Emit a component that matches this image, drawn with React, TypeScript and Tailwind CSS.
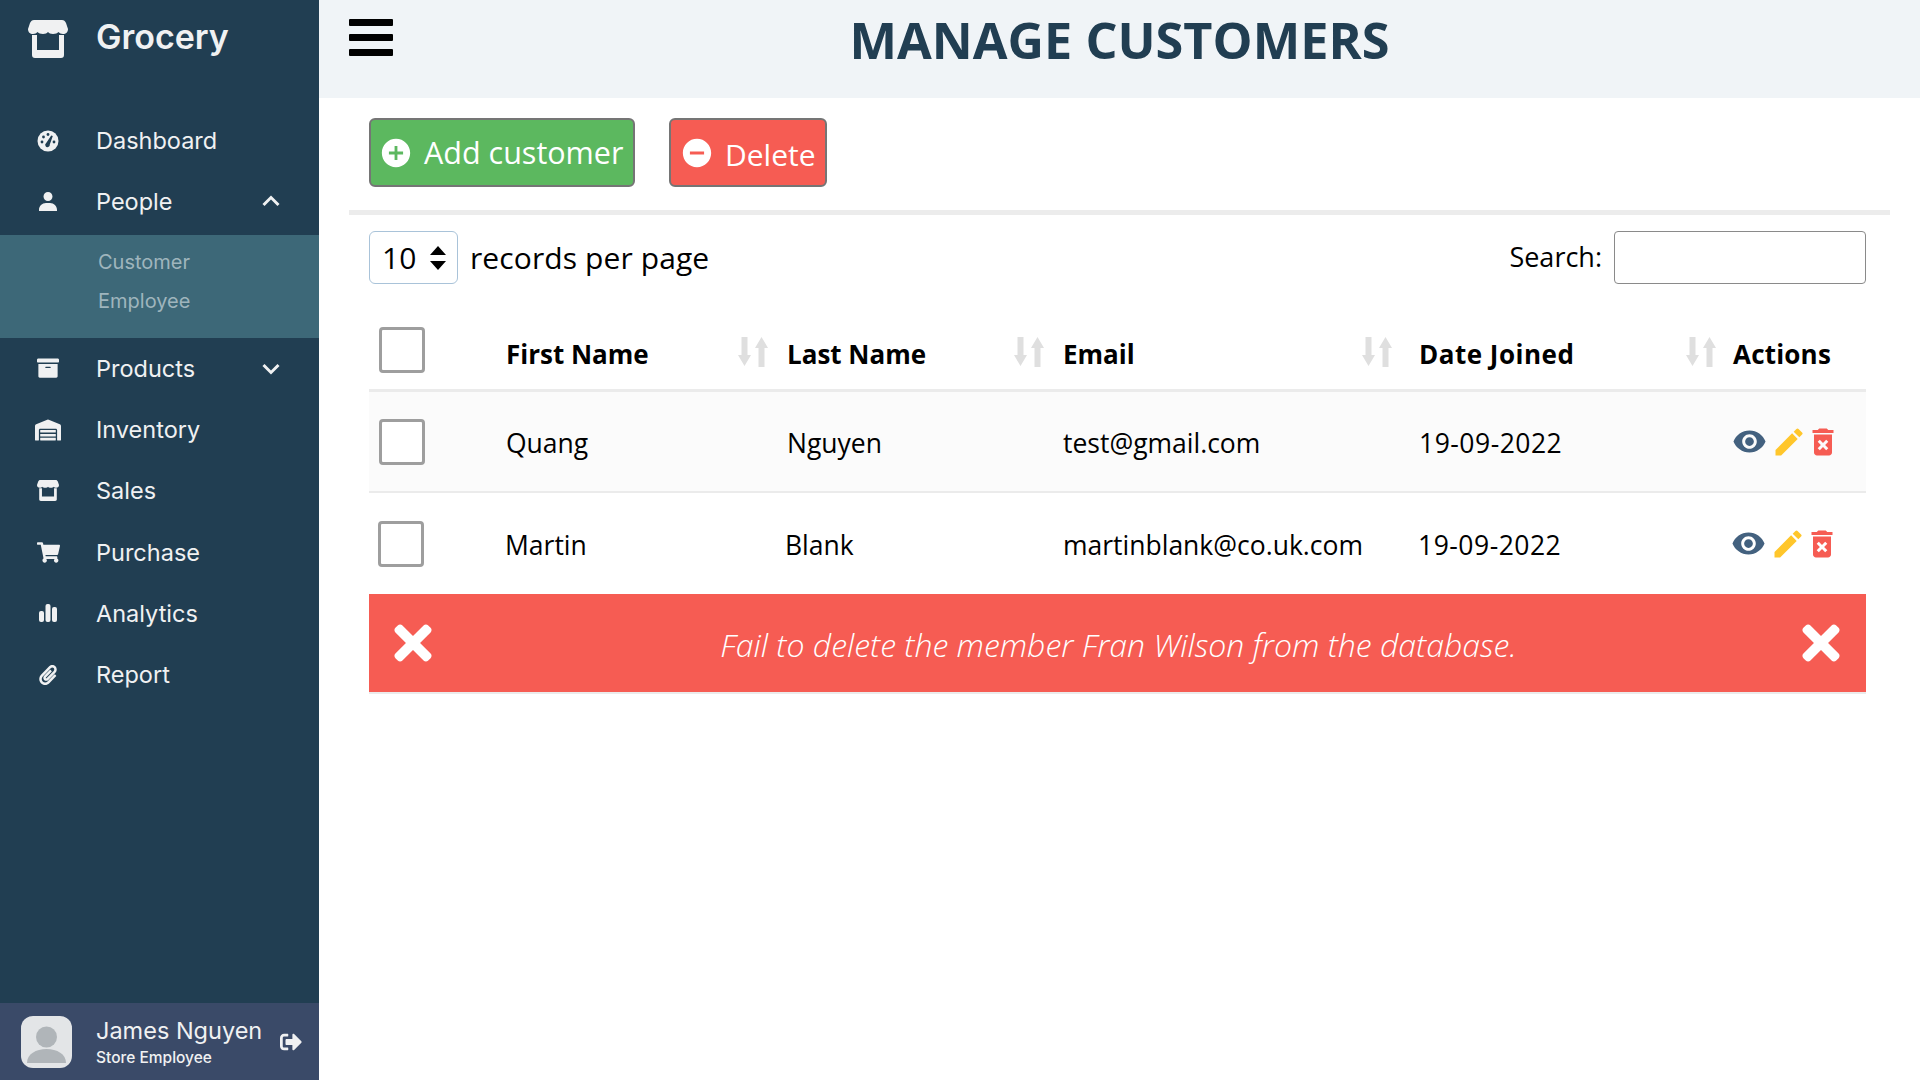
import React from 'react';
import { BiSolidUser, BiChevronUp, BiChevronDown } from 'react-icons/bi';
import {
  MdAddCircle,
  MdRemoveCircle,
  MdRemoveRedEye,
  MdEdit,
  MdDeleteForever,
} from 'react-icons/md';
import {
  FaTimes,
  FaWarehouse,
  FaArchive,
  FaShoppingCart,
  FaPaperclip,
  FaSignOutAlt,
} from 'react-icons/fa';

const StoreIcon = ({ className }: { className: string }) => (
  <svg viewBox="0 0 40 38" className={className} fill="currentColor">
    <path d="M6 0h28c2 0 3 1 4 3l2 6c0 3-2 5-5 5-2 0-3.5-1-4.5-2-1 1-3 2-5.5 2s-4-1-5-2c-1 1-2.5 2-5 2s-4.5-1-5.5-2c-1 1-2.5 2-4.5 2-3 0-5-2-5-5l2-6c1-2 2-3 4-3z" />
    <path d="M4 15h5v15h22V15h5v20c0 2-1 3-3 3H7c-2 0-3-1-3-3z" />
  </svg>
);

const GaugeIcon = () => (
  <svg viewBox="0 0 22 22" className="h-[22px] w-[22px]">
    <circle cx="11" cy="11" r="10.500" fill="currentColor" />
    <g fill="#213e52">
      <circle cx="5" cy="12" r="1.400" />
      <circle cx="6.500" cy="7" r="1.400" />
      <circle cx="11" cy="4.500" r="1.400" />
      <circle cx="17" cy="12" r="1.400" />
      <path d="M14.200 5.400l1.600.7-3 8.400a2.300 2.300 0 1 1-3.600-1.500z" />
    </g>
  </svg>
);

const BarsIcon = () => (
  <svg viewBox="0 0 18 18" className="h-[18px] w-[18px]" fill="currentColor">
    <rect x="0" y="7" width="5" height="11" rx="2" />
    <rect x="6.500" y="0" width="5" height="18" rx="2" />
    <rect x="13" y="3" width="5" height="15" rx="2" />
  </svg>
);

const SortIcon = () => (
  <svg viewBox="0 0 30 30" className="-mt-[6px] h-[30px] w-[30px] text-[#dfdfdf]" fill="currentColor">
    <path d="M3.500 0h6v18H13l-6.500 11L0 18h3.500z" />
    <path d="M20.500 30h6V11H30L23.500 0 17 11h3.500z" />
  </svg>
);

const Checkbox = ({ className = '' }: { className?: string }) => (
  <div className={`h-[46px] w-[46px] rounded-[4px] border-[3px] border-[#9e9e9e] bg-white ${className}`} />
);

const NavItem = ({
  icon,
  label,
  chevron,
}: {
  icon: React.ReactNode;
  label: string;
  chevron?: React.ReactNode;
}) => (
  <div className="flex h-[61.3px] items-center text-[#f0f1f2]">
    <div className="flex w-[96px] justify-center">{icon}</div>
    <span className="flex-1 text-[23.5px]">{label}</span>
    {chevron && <div className="mr-[30px]">{chevron}</div>}
  </div>
);

const Sidebar = () => (
  <aside className="flex h-screen w-[319px] shrink-0 flex-col bg-[#213e52] font-['Inter',sans-serif]">
    <div className="flex h-[110px] items-start pt-[15px] text-[#f0f1f2]">
      <div className="flex w-[96px] justify-center pt-[5px]">
        <StoreIcon className="h-[38px] w-[40px]" />
      </div>
      <span className="text-[34px] leading-[44px] font-semibold">Grocery</span>
    </div>
    <NavItem icon={<GaugeIcon />} label="Dashboard" />
    <NavItem
      icon={<BiSolidUser className="h-[24px] w-[24px]" />}
      label="People"
      chevron={<BiChevronUp className="h-[36px] w-[36px]" />}
    />
    <div className="mt-[2px] flex h-[103px] flex-col justify-center gap-[14px] bg-[#3d6878] pb-[8px] pl-[98px] text-[20px] leading-[25px] text-[#9fb5bd]">
      <span>Customer</span>
      <span>Employee</span>
    </div>
    <NavItem
      icon={<FaArchive className="h-[22px] w-[22px]" />}
      label="Products"
      chevron={<BiChevronDown className="h-[36px] w-[36px]" />}
    />
    <NavItem icon={<FaWarehouse className="h-[26px] w-[26px]" />} label="Inventory" />
    <NavItem icon={<StoreIcon className="h-[21px] w-[22px]" />} label="Sales" />
    <NavItem icon={<FaShoppingCart className="h-[23px] w-[23px]" />} label="Purchase" />
    <NavItem icon={<BarsIcon />} label="Analytics" />
    <NavItem icon={<FaPaperclip className="h-[20px] w-[20px]" />} label="Report" />
    <div className="mt-auto flex h-[77px] items-center bg-[#3a4a68] pl-[21px] text-[#f0f1f2]">
      <div className="flex h-[52px] w-[51px] items-end justify-center overflow-hidden rounded-[12px] bg-[#e3e5e7]">
        <svg viewBox="0 0 51 52" className="h-[52px] w-[51px]" fill="#b0b5b9">
          <circle cx="25.5" cy="21" r="10.5" />
          <path d="M6 47c0-9 9-14 19.500-14S45 38 45 47z" />
        </svg>
      </div>
      <div className="mt-[2px] ml-[24px] flex w-[184px] flex-col">
        <span className="text-[23.5px] leading-[30px]">James Nguyen</span>
        <span className="text-[15.5px] leading-[24px] font-medium">Store Employee</span>
      </div>
      <FaSignOutAlt className="h-[22px] w-[22px]" />
    </div>
  </aside>
);

const Row = ({
  first,
  last,
  email,
  date,
  className,
  shifted,
}: {
  first: string;
  last: string;
  email: string;
  date: string;
  className: string;
  shifted?: boolean;
}) => (
  <div className={`grid grid-cols-[137px_281px_276px_356px_314px_1fr] items-center text-[26.5px] ${className}`}>
    <Checkbox className={shifted ? 'ml-[9px]' : 'ml-[10px]'} />
    <span className={`pt-[5px] ${shifted ? '-ml-[1px]' : ''}`}>{first}</span>
    <span className={`pt-[5px] ${shifted ? '-ml-[2px]' : ''}`}>{last}</span>
    <span className="pt-[5px]">{email}</span>
    <span className={`pt-[5px] tracking-[0.5px] ${shifted ? '-ml-[1px]' : ''}`}>{date}</span>
    <div className={`flex items-center ${shifted ? '-ml-[2.5px]' : '-ml-[1.5px]'}`}>
      <MdRemoveRedEye className="h-[35px] w-[35px] text-[#43617f]" />
      <MdEdit className="ml-[4px] h-[36px] w-[36px] text-[#ffc62b]" />
      <MdDeleteForever className="-ml-[2px] h-[36px] w-[36px] text-[#f65c53]" />
    </div>
  </div>
);

const App = () => (
  <div className="flex h-screen w-full bg-white font-['Open_Sans',sans-serif] text-black">
    <Sidebar />
    <main className="flex min-w-0 flex-1 flex-col">
      <header className="relative flex h-[98px] items-center justify-center bg-[#f0f4f7] pb-[18px]">
        <svg viewBox="0 0 44 37" className="absolute top-[19px] left-[30px] h-[37px] w-[44px]" fill="#000">
          <rect width="44" height="7" rx="1" />
          <rect y="15" width="44" height="7" rx="1" />
          <rect y="30" width="44" height="7" rx="1" />
        </svg>
        <h1 className="text-[50.4px] leading-none font-bold text-[#213e52]">MANAGE CUSTOMERS</h1>
      </header>

      <div className="flex flex-col px-[30px]">
        <div className="flex gap-[34px] pt-[20px] pb-[23px] pl-[20px]">
          <button className="flex h-[69px] w-[266px] items-center gap-[11px] rounded-[6px] border-[2px] border-[#757575] bg-[#5cb85f] pl-[8px] text-[30.5px] text-white">
            <MdAddCircle className="h-[34px] w-[34px]" />
            Add customer
          </button>
          <button className="flex h-[69px] w-[158px] items-center gap-[11px] rounded-[6px] border-[2px] border-[#757575] bg-[#f65c53] pl-[9px] text-[30px] text-white">
            <MdRemoveCircle className="h-[34px] w-[34px]" />
            <span className="pt-[4px]">Delete</span>
          </button>
        </div>
        <div className="h-[5px] bg-[#ececec]" />

        <div className="pr-[24px] pl-[20px]">
          <div className="mt-[16px] flex h-[53px] items-center justify-between">
            <div className="flex items-center text-[30px]">
              <div className="flex h-[53px] w-[89px] items-center justify-between rounded-[6px] border border-[#a9c3d9] pr-[11px] pl-[12px]">
                <span>10</span>
                <svg viewBox="0 0 16 24" className="h-[24px] w-[16px]" fill="#000">
                  <path d="M8 0l8 9H0zM8 24l8-9H0z" />
                </svg>
              </div>
              <span className="ml-[12px] -mt-[1px] tracking-[0.1px]">records per page</span>
            </div>
            <div className="flex items-center text-[27px]">
              <span>Search:</span>
              <div className="ml-[12px] h-[53px] w-[252px] rounded-[4px] border border-[#8a8a8a]" />
            </div>
          </div>

          <div className="mt-[36px] grid h-[72px] grid-cols-[137px_281px_276px_356px_314px_1fr] items-center border-b-[3px] border-[#ebebeb] text-[26px] font-bold">
            <Checkbox className="-mt-[9px] ml-[10px]" />
            <div className="flex items-center justify-between pr-[19px]"><span>First Name</span><SortIcon /></div>
            <div className="flex items-center justify-between pr-[19px]"><span>Last Name</span><SortIcon /></div>
            <div className="flex items-center justify-between pr-[27px]"><span>Email</span><SortIcon /></div>
            <div className="flex items-center justify-between pr-[17px]"><span className="tracking-[0.5px]">Date Joined</span><SortIcon /></div>
            <span className="tracking-[0.2px]">Actions</span>
          </div>

          <Row
            first="Quang"
            last="Nguyen"
            email="test@gmail.com"
            date="19-09-2022"
            className="h-[101px] border-b-[2px] border-[#ebebeb] bg-[#fbfbfb]"
          />
          <Row
            first="Martin"
            last="Blank"
            email="martinblank@co.uk.com"
            date="19-09-2022"
            shifted
            className="h-[101px]"
          />

          <div className="flex h-[100px] items-center justify-between border-b-[2px] border-[#ebebeb] bg-[#f65c53] pr-[18px] pl-[17px] text-white">
            <FaTimes className="h-[54px] w-[54px]" />
            <span className="mt-[3px] ml-[3px] text-[32px] font-light italic">Fail to delete the member Fran Wilson from the database.</span>
            <FaTimes className="h-[54px] w-[54px]" />
          </div>
        </div>
      </div>
    </main>
  </div>
);

export default App;
